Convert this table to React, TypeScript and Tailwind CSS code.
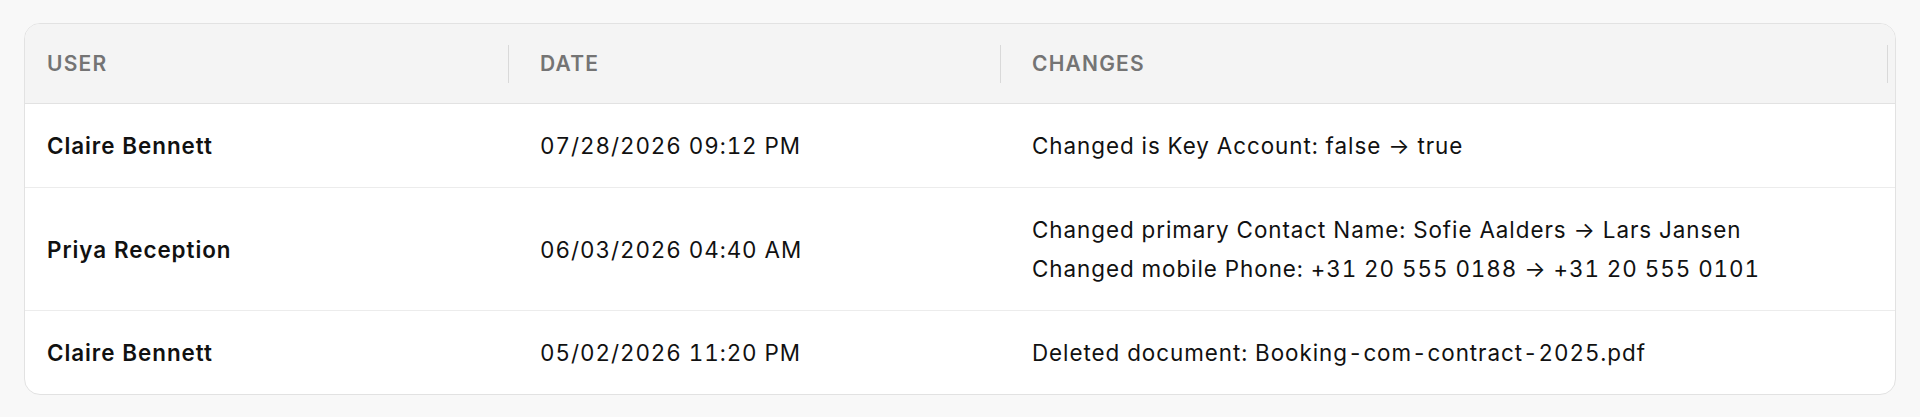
import React from "react";

type Entry = {
  user: string;
  date: string;
  changes: string[];
};

const entries: Entry[] = [
  {
    user: "Claire Bennett",
    date: "07/28/2026 09:12 PM",
    changes: ["Changed is Key Account: false → true"],
  },
  {
    user: "Priya Reception",
    date: "06/03/2026 04:40 AM",
    changes: [
      "Changed primary Contact Name: Sofie Aalders → Lars Jansen",
      "Changed mobile Phone: +31 20 555 0188 → +31 20 555 0101",
    ],
  },
  {
    user: "Claire Bennett",
    date: "05/02/2026 11:20 PM",
    changes: ["Deleted document: Booking-com-contract-2025.pdf"],
  },
];

const HeaderCell = ({ label, first }: { label: string; first?: boolean }) => (
  <div className={`flex items-center ${first ? "pl-[22px]" : "pl-6"}`}>
    <span className="flex-1 text-[21px] font-semibold uppercase tracking-[1.2px] text-[#747474]">
      {label}
    </span>
    <div className="mr-[7px] h-[38px] w-px bg-[#d9d9d9]" />
  </div>
);

export default function App() {
  return (
    <div
      className="min-h-[417px] bg-[#f8f8f8] px-6 pt-[23px] pb-6"
      style={{ fontFamily: "Inter, 'Noto Sans', sans-serif" }}
    >
      <div className="overflow-hidden rounded-2xl border border-[#e2e2e2] bg-white">
        {/* Header */}
        <div className="grid h-[80px] grid-cols-[491px_492px_1fr] border-b border-[#e2e2e2] bg-[#f4f4f4]">
          <HeaderCell label="User" first />
          <HeaderCell label="Date" />
          <HeaderCell label="Changes" />
        </div>

        {/* Rows */}
        {entries.map((e, i) => (
          <div
            key={i}
            className={`grid grid-cols-[491px_492px_1fr] items-center py-[22px] text-[22.4px] leading-[39px] tracking-[0.95px] tabular-nums text-[#111111] ${
              i < entries.length - 1 ? "border-b border-[#ececec]" : ""
            }`}
          >
            <div className="pl-[22px] font-semibold">{e.user}</div>
            <div className="pl-6">{e.date}</div>
            <div className="pl-6">
              {e.changes.map((c, j) => (
                <div key={j}>{c}</div>
              ))}
            </div>
          </div>
        ))}
      </div>
    </div>
  );
}
